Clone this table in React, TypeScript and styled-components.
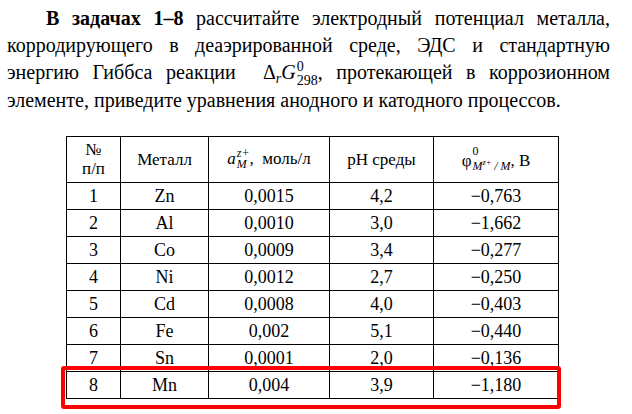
import React from 'react';
import styled, { createGlobalStyle } from 'styled-components';

const GlobalStyle = createGlobalStyle`
  html, body {
    margin: 0;
    padding: 0;
    background: #fff;
  }
  body {
    width: 632px;
    height: 414px;
    overflow: hidden;
    font-family: 'Liberation Serif', 'Times New Roman', serif;
    color: #000;
  }
`;

const Page = styled.div`
  padding: 5px 22px 0 7px;
`;

const Task = styled.p`
  margin: 0;
  font-size: 20px;
  line-height: 27px;
  text-align: justify;
  text-indent: 39px;
  b {
    font-weight: 700;
  }
`;

const Math = styled.span`
  white-space: nowrap;
  i {
    font-style: italic;
  }
`;

const Low = styled.span`
  font-size: 0.7em;
  vertical-align: -0.25em;
  line-height: 0;
`;

/* super/subscript pair: top line is the upper index, bottom line sits as subscript */
const Stack = styled.span`
  display: inline-block;
  vertical-align: -0.4em;
  font-size: 0.7em;
  line-height: 0.95em;
  text-align: left;
  text-indent: 0;
  margin-left: 1px;
  span {
    display: block;
  }
`;

const TableBox = styled.div`
  position: relative;
  width: 487px;
  margin: 22px 0 0 59px;
`;

const Grid = styled.table`
  width: 487px;
  border-collapse: collapse;
  table-layout: fixed;
  font-size: 18px;
`;

const Head = styled.th<{ $w: number }>`
  width: ${(p) => p.$w}px;
  height: 45px;
  padding: 0;
  border: 1px solid #000;
  font-weight: 400;
  font-size: 17px;
  line-height: 19px;
  text-align: center;
  vertical-align: middle;
`;

const Cell = styled.td`
  height: 26px;
  padding: 0;
  border: 1px solid #000;
  text-align: center;
  vertical-align: middle;
  line-height: 20px;
`;

const Highlight = styled.div`
  position: absolute;
  left: -5px;
  right: -8px;
  bottom: -10px;
  height: 43px;
  box-sizing: border-box;
  border: 4px solid #ff0000;
  border-radius: 3px;
  pointer-events: none;
`;

const rows = [
  ['1', 'Zn', '0,0015', '4,2', '−0,763'],
  ['2', 'Al', '0,0010', '3,0', '−1,662'],
  ['3', 'Co', '0,0009', '3,4', '−0,277'],
  ['4', 'Ni', '0,0012', '2,7', '−0,250'],
  ['5', 'Cd', '0,0008', '4,0', '−0,403'],
  ['6', 'Fe', '0,002', '5,1', '−0,440'],
  ['7', 'Sn', '0,0001', '2,0', '−0,136'],
  ['8', 'Mn', '0,004', '3,9', '−1,180'],
];

export default function App() {
  return (
    <Page>
      <GlobalStyle />
      <Task>
        <b>В задачах 1–8</b> рассчитайте электродный потенциал металла,
        корродирующего в деаэрированной среде, ЭДС и стандартную энергию
        Гиббса реакции&nbsp;{' '}
        <Math>
          Δ<Low><i>r</i></Low>
          <i>G</i>
          <Stack>
            <span>0</span>
            <span>298</span>
          </Stack>
          ,
        </Math>{' '}
        протекающей в коррозионном элементе, приведите уравнения анодного и
        катодного процессов.
      </Task>
      <TableBox>
        <Grid>
          <thead>
            <tr>
              <Head $w={53}>
                №<br />п/п
              </Head>
              <Head $w={87}>Металл</Head>
              <Head $w={120}>
                <Math>
                  <i>a</i>
                  <Stack>
                    <span><i>z+</i></span>
                    <span><i>M</i></span>
                  </Stack>
                </Math>
                ,&nbsp; моль/л
              </Head>
              <Head $w={103}>pH среды</Head>
              <Head $w={124}>
                <Math>
                  φ
                  <Stack>
                    <span>0</span>
                    <span>
                      <i>
                        M<sup style={{ fontSize: '0.7em' }}>z+</sup> / M
                      </i>
                    </span>
                  </Stack>
                </Math>
                , В
              </Head>
            </tr>
          </thead>
          <tbody>
            {rows.map((r) => (
              <tr key={r[0]}>
                {r.map((v, i) => (
                  <Cell key={i}>{v}</Cell>
                ))}
              </tr>
            ))}
          </tbody>
        </Grid>
        <Highlight />
      </TableBox>
    </Page>
  );
}
